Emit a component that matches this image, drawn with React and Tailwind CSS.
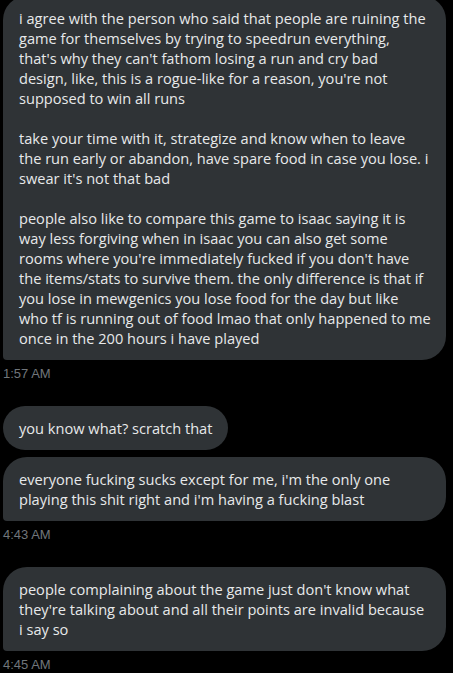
export default function App() {
  const bubble =
    "bg-[#2f3336] text-[#e7e9ea] text-[14.6px] leading-5 px-4 py-3 rounded-3xl whitespace-pre font-['Open_Sans',sans-serif]";
  const ts = "text-[13px] leading-4 text-[#71767b] mt-[6px]";
  const first = [
    "i agree with the person who said that people are ruining the",
    "game for themselves by trying to speedrun everything,",
    "that's why they can't fathom losing a run and cry bad",
    "design, like, this is a rogue-like for a reason, you're not",
    "supposed to win all runs",
    "",
    "take your time with it, strategize and know when to leave",
    "the run early or abandon, have spare food in case you lose. i",
    "swear it's not that bad",
    "",
    "people also like to compare this game to isaac saying it is",
    "way less forgiving when in isaac you can also get some",
    "rooms where you're immediately fucked if you don't have",
    "the items/stats to survive them. the only difference is that if",
    "you lose in mewgenics you lose food for the day but like",
    "who tf is running out of food lmao that only happened to me",
    "once in the 200 hours i have played",
  ];
  return (
    <div className="h-[673px] bg-black overflow-hidden pl-[3px] font-['Liberation_Sans',Arial,sans-serif]">
      <div className="flex flex-col items-start w-[443px] -mt-1">
        <div className={`${bubble} w-full rounded-bl-[4px]`}>
          {first.map((l, i) => (
            <div key={i} className="h-5">
              {l}
            </div>
          ))}
        </div>
        <div className={ts}>1:57 AM</div>

        <div className={`${bubble} mt-6`}>you know what? scratch that</div>
        <div className={`${bubble} w-full mt-[7px] rounded-bl-[4px]`}>
          {"everyone fucking sucks except for me, i'm the only one\nplaying this shit right and i'm having a fucking blast"}
        </div>
        <div className={ts}>4:43 AM</div>

        <div className={`${bubble} w-full mt-6 rounded-bl-[4px]`}>
          {"people complaining about the game just don't know what\nthey're talking about and all their points are invalid because\ni say so"}
        </div>
        <div className={ts}>4:45 AM</div>
      </div>
    </div>
  );
}
